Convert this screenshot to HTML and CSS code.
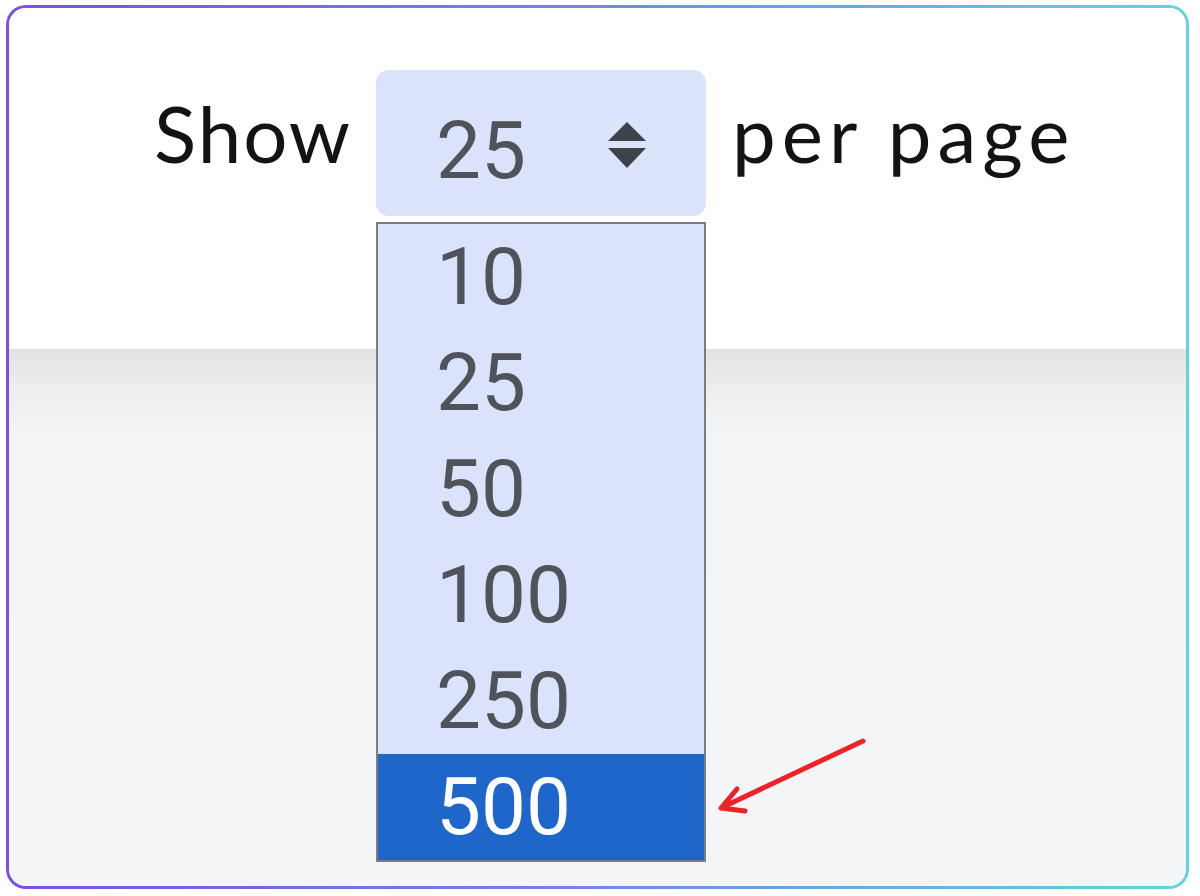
FILE: index.html
```html
<!DOCTYPE html>
<html>
<head>
<meta charset="utf-8">
<link rel="stylesheet" href="styles.css">
</head>
<body>
<div class="frame">
  <div class="inner">
    <div class="top">
      <div class="row">
        <span class="label show">Show</span>
        <div class="select">
          <span class="value">25</span>
          <svg class="updown" width="38" height="47" viewBox="0 0 38 47">
            <path d="M19 0 L38 19 L0 19 Z" fill="#3d434b"/>
            <path d="M0 26 L38 26 L19 46 Z" fill="#3d434b"/>
          </svg>
        </div>
        <span class="label per">per page</span>
      </div>
      <ul class="options">
        <li class="opt">10</li>
        <li class="opt">25</li>
        <li class="opt">50</li>
        <li class="opt">100</li>
        <li class="opt">250</li>
        <li class="opt selected">500</li>
      </ul>
    </div>
    <div class="bottom"></div>
  </div>
  <svg class="pointer" width="170" height="90" viewBox="0 0 170 90">
    <path d="M152 11 L14 76" stroke="#ec2226" stroke-width="5" stroke-linecap="round" fill="none"/>
    <path d="M26 59 L10 78 L34 81" stroke="#ec2226" stroke-width="5" stroke-linecap="round" stroke-linejoin="round" fill="none"/>
  </svg>
</div>
</body>
</html>
```

FILE: styles.css
```css
html, body {
  margin: 0;
  padding: 0;
  background: #ffffff;
}

.frame {
  position: relative;
  box-sizing: border-box;
  width: 1183px;
  height: 884px;
  margin: 5px 0 0 6px;
  border: 3px solid transparent;
  border-radius: 20px;
  background:
    linear-gradient(#ffffff, #ffffff) padding-box,
    linear-gradient(90deg, #7b4ee6 0%, #6d8ae6 50%, #62d4e0 100%) border-box;
}

.inner {
  height: 100%;
  border-radius: 17px;
  overflow: hidden;
  display: flex;
  flex-direction: column;
}

.top {
  position: relative;
  height: 341px;
  background: #ffffff;
}

.bottom {
  flex: 1;
  background: linear-gradient(180deg, #e2e2e2 0px, #eeeeee 40px, #f3f4f5 90px, #f4f5f6 100%);
}

.row {
  display: flex;
  align-items: flex-start;
  padding: 62px 0 0 145px;
}

.label {
  font-family: Lato, "Open Sans", sans-serif;
  font-size: 78px;
  line-height: 78px;
  color: #131313;
  margin-top: 24px;
}

.show {
  letter-spacing: 2px;
}

.per {
  margin-left: 26px;
  letter-spacing: 6px;
}

.select {
  box-sizing: border-box;
  width: 330px;
  height: 146px;
  margin-left: 24px;
  border-radius: 13px;
  background: #dbe3fb;
  display: flex;
  justify-content: space-between;
  align-items: flex-start;
  padding: 41px 60px 0 60px;
}

.value {
  font-family: Roboto, "Liberation Sans", sans-serif;
  font-size: 80px;
  line-height: 80px;
  color: #4f545b;
}

.updown {
  margin-top: 11px;
}

.options {
  position: absolute;
  left: 367px;
  top: 214px;
  box-sizing: border-box;
  width: 330px;
  margin: 0;
  padding: 0;
  list-style: none;
  border: 2px solid #7b7d82;
  background: #dae3fb;
}

.opt {
  height: 106px;
  line-height: 106px;
  padding-left: 58px;
  font-family: Roboto, "Liberation Sans", sans-serif;
  font-size: 80px;
  color: #4f545b;
}

.opt.selected {
  background: #1f66cb;
  color: #ffffff;
}

.pointer {
  position: absolute;
  left: 702px;
  top: 722px;
}
```
